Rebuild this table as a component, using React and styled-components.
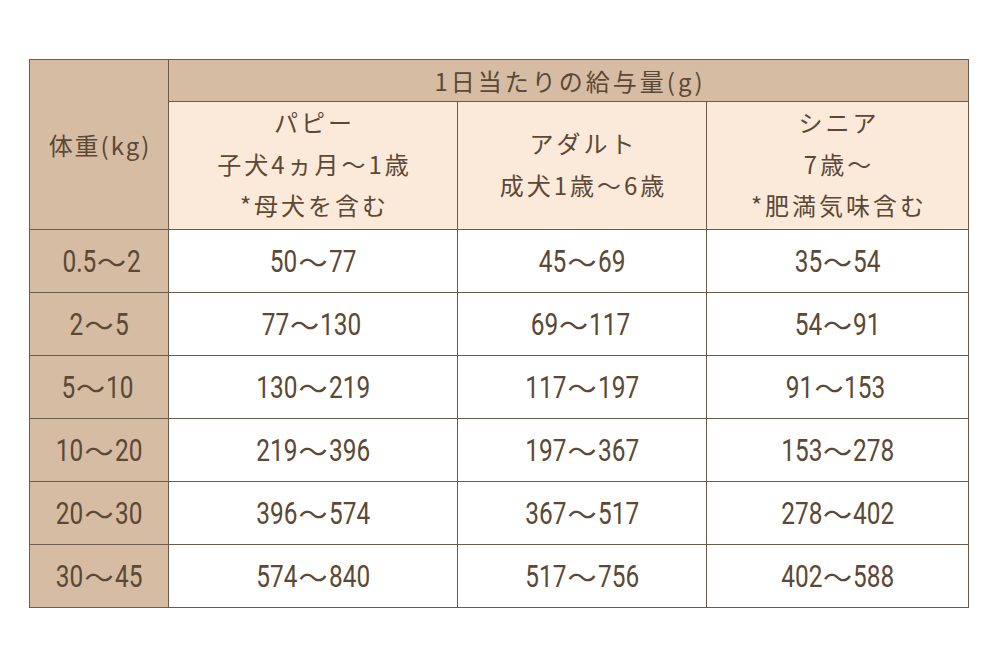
import React from "react";
import styled, { createGlobalStyle } from "styled-components";

const GlobalStyle = createGlobalStyle`
  html, body {
    margin: 0;
    padding: 0;
    background: #ffffff;
  }
`;

const Page = styled.div`
  width: 1000px;
  height: 670px;
  padding: 59px 0 0 29px;
  box-sizing: border-box;
`;

const Table = styled.table`
  border-collapse: collapse;
  table-layout: fixed;
  width: 939px;
  color: #5b4835;
  font-family: "Noto Sans CJK JP", "Noto Sans", sans-serif;
  border: 1.5px solid #6d5b48;
`;

const Cell = styled.td`
  border: 1.5px solid #6d5b48;
  text-align: center;
  vertical-align: middle;
  padding: 0;
  background: ${(p) => (p.$tone === "dark" ? "#d5bca2" : p.$tone === "light" ? "#fbe9da" : "#ffffff")};
  height: ${(p) => p.$h || 62}px;
`;

const HeadText = styled.div`
  font-size: 24px;
  line-height: 41px;
  letter-spacing: ${(p) => p.$ls || 3}px;
  padding-left: ${(p) => p.$ls || 3}px;
`;

const SubHead = styled.div`
  font-size: 24px;
  line-height: 41.5px;
  letter-spacing: 3px;
  padding-left: 3px;
  transform: translateY(-2px);
`;

const Num = styled.span`
  display: inline-flex;
  align-items: center;
  justify-content: center;
  line-height: 1;
  transform: translateY(1px);
`;

const Digits = styled.span`
  display: inline-block;
  font-family: "Roboto", "Noto Sans", sans-serif;
  font-size: 30.5px;
  font-weight: 400;
  transform: scaleX(0.8);
  transform-origin: ${(p) => (p.$side === "left" ? "right" : "left")} center;
`;

const Tilde = styled.span`
  font-family: "Noto Sans CJK JP", sans-serif;
  font-size: 29px;
  margin: 0 1px;
  transform: translateY(-1px);
`;

const Range = ({ text }) => {
  const [a, b] = text.split("～");
  return (
    <Num>
      <Digits $side="left">{a}</Digits>
      <Tilde>～</Tilde>
      <Digits $side="right">{b}</Digits>
    </Num>
  );
};

const rows = [
  ["0.5～2", "50～77", "45～69", "35～54"],
  ["2～5", "77～130", "69～117", "54～91"],
  ["5～10", "130～219", "117～197", "91～153"],
  ["10～20", "219～396", "197～367", "153～278"],
  ["20～30", "396～574", "367～517", "278～402"],
  ["30～45", "574～840", "517～756", "402～588"],
];

const groups = [
  ["パピー", "子犬4ヵ月～1歳", "*母犬を含む"],
  ["アダルト", "成犬1歳～6歳"],
  ["シニア", "7歳～", "*肥満気味含む"],
];

export default function App() {
  return (
    <Page>
      <GlobalStyle />
      <Table>
        <colgroup>
          <col style={{ width: 139 }} />
          <col style={{ width: 289 }} />
          <col style={{ width: 249 }} />
          <col style={{ width: 262 }} />
        </colgroup>
        <tbody>
          <tr>
            <Cell $tone="dark" rowSpan={2}>
              <HeadText $ls={2}>体重(kg)</HeadText>
            </Cell>
            <Cell $tone="dark" colSpan={3} $h={41}>
              <HeadText>1日当たりの給与量(g)</HeadText>
            </Cell>
          </tr>
          <tr>
            {groups.map((g, i) => (
              <Cell key={i} $tone="light" $h={127}>
                {g.map((line) => (
                  <SubHead key={line}>{line}</SubHead>
                ))}
              </Cell>
            ))}
          </tr>
          {rows.map((r) => (
            <tr key={r[0]}>
              {r.map((v, i) => (
                <Cell key={i} $tone={i === 0 ? "dark" : "white"}>
                  <Range text={v} />
                </Cell>
              ))}
            </tr>
          ))}
        </tbody>
      </Table>
    </Page>
  );
}
